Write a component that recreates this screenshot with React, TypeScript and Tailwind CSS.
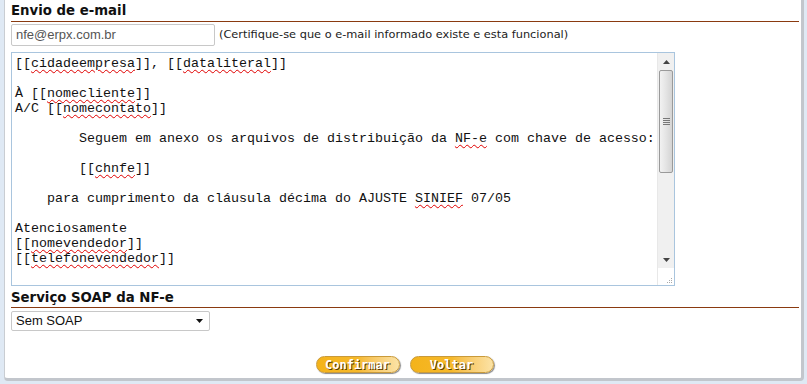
import React from "react";

const W = ({ children }: { children: React.ReactNode }) => (
  <span className="underline decoration-wavy decoration-[#e00000] decoration-1 underline-offset-[2px]">{children}</span>
);

export default function App() {
  return (
    <div className="w-[807px] h-[384px] bg-[#dfe9f4] overflow-hidden">
      <div className="ml-[4px] w-[800px] h-[381px] bg-white border-l border-[#c9cdd2] border-r-[3px] border-b-[3px] border-r-[#c2c6cc] border-b-[#c2c6cc] rounded-br-[4px] rounded-bl-[4px] pl-[6px] pr-[3px] pt-[3px] flex flex-col">
        <div className="w-[788px] border-b border-[#8a3a10] pb-[2px] text-[13.3px] leading-[16px] font-bold text-[#111]" style={{ fontFamily: '"DejaVu Sans", Verdana, sans-serif' }}>
          Envio de e-mail
        </div>
        <div className="flex items-center mt-[2px] h-[22px]">
          <div className="w-[204px] h-[22px] border border-[#c8c8c8] rounded-[2px] flex items-center pl-[4px] text-[13px] text-[#555]" style={{ fontFamily: '"Liberation Sans", Arial, sans-serif' }}>
            nfe@erpx.com.br
          </div>
          <div className="ml-[4px] text-[11.35px] text-[#222]" style={{ fontFamily: '"DejaVu Sans", Verdana, sans-serif' }}>
            (Certifique-se que o e-mail informado existe e esta funcional)
          </div>
        </div>
        <div className="mt-[6px] w-[664px] h-[234px] border border-[#a9c5de] flex relative">
          <div className="flex-1 pl-[3px] pt-[3px] text-[13.333px] leading-[15px] text-[#111] whitespace-pre" style={{ fontFamily: '"Liberation Mono", "Courier New", monospace' }}>
            <div>[[<W>cidadeempresa</W>]], [[<W>dataliteral</W>]]</div>
            <div> </div>
            <div>À [[<W>nomecliente</W>]]</div>
            <div>A/C [[<W>nomecontato</W>]]</div>
            <div> </div>
            <div>{"        Seguem em anexo os arquivos de distribuição da "}<W>NF-e</W> com chave de acesso:</div>
            <div> </div>
            <div>{"        [["}<W>chnfe</W>]]</div>
            <div> </div>
            <div>{"    para cumprimento da cláusula décima do AJUSTE "}<W>SINIEF</W> 07/05</div>
            <div> </div>
            <div>Atenciosamente</div>
            <div>[[<W>nomevendedor</W>]]</div>
            <div>[[<W>telefonevendedor</W>]]</div>
          </div>
          <div className="w-[17px] flex flex-col bg-[#f0f0f0] border-l border-[#e8e8e8]">
            <div className="h-[17px] flex items-center justify-center">
              <svg width="7" height="4" viewBox="0 0 7 4"><path d="M0 4 L3.5 0 L7 4 Z" fill="#444" /></svg>
            </div>
            <div className="mx-[1px] h-[103px] rounded-[2px] border border-[#9a9a9a] bg-gradient-to-r from-[#f2f2f2] via-[#e4e4e4] to-[#d4d4d4] flex items-center justify-center">
              <svg width="7" height="7" viewBox="0 0 7 7"><path d="M0 0.5h7M0 2.5h7M0 4.5h7M0 6.5h7" stroke="#777" strokeWidth="1" /></svg>
            </div>
            <div className="flex-1" />
            <div className="h-[17px] flex items-center justify-center">
              <svg width="7" height="4" viewBox="0 0 7 4"><path d="M0 0 L3.5 4 L7 0 Z" fill="#444" /></svg>
            </div>
            <div className="h-[17px] bg-white flex items-end justify-end pr-[1px] pb-[1px]">
              <svg width="8" height="8" viewBox="0 0 8 8">
                <rect x="6" y="2" width="1" height="1" fill="#aaa" />
                <rect x="4" y="4" width="1" height="1" fill="#aaa" />
                <rect x="6" y="4" width="1" height="1" fill="#aaa" />
                <rect x="2" y="6" width="1" height="1" fill="#aaa" />
                <rect x="4" y="6" width="1" height="1" fill="#aaa" />
                <rect x="6" y="6" width="1" height="1" fill="#aaa" />
              </svg>
            </div>
          </div>
        </div>
        <div className="mt-[4px] w-[788px] border-b border-[#8a3a10] pb-[1px] text-[13.3px] leading-[16px] font-bold text-[#111]" style={{ fontFamily: '"DejaVu Sans", Verdana, sans-serif' }}>
          Serviço SOAP da NF-e
        </div>
        <div className="mt-[3px] w-[199px] h-[20px] border border-[#c8c8c8] rounded-[2px] flex items-center justify-between pl-[4px] pr-[6px] text-[13px] text-[#111]" style={{ fontFamily: '"Liberation Sans", Arial, sans-serif' }}>
          <span>Sem SOAP</span>
          <svg width="7" height="4" viewBox="0 0 7 4"><path d="M0 0 L3.5 4 L7 0 Z" fill="#111" /></svg>
        </div>
        <div className="flex justify-center gap-[10px] mt-[25px]">
          {["Confirmar", "Voltar"].map((t) => (
            <div
              key={t}
              className="w-[84px] h-[17px] rounded-full border border-[#c99a3a] bg-gradient-to-r from-[#f4b31a] via-[#f6b92a] to-[#fbe3a6] flex items-center justify-center text-[12px] font-bold text-white shadow-[1px_1px_1px_#8a8a8a]"
              style={{ fontFamily: '"DejaVu Sans Mono", monospace', textShadow: "1px 1px 0 #5a3a00" }}
            >
              {t}
            </div>
          ))}
        </div>
      </div>
    </div>
  );
}
